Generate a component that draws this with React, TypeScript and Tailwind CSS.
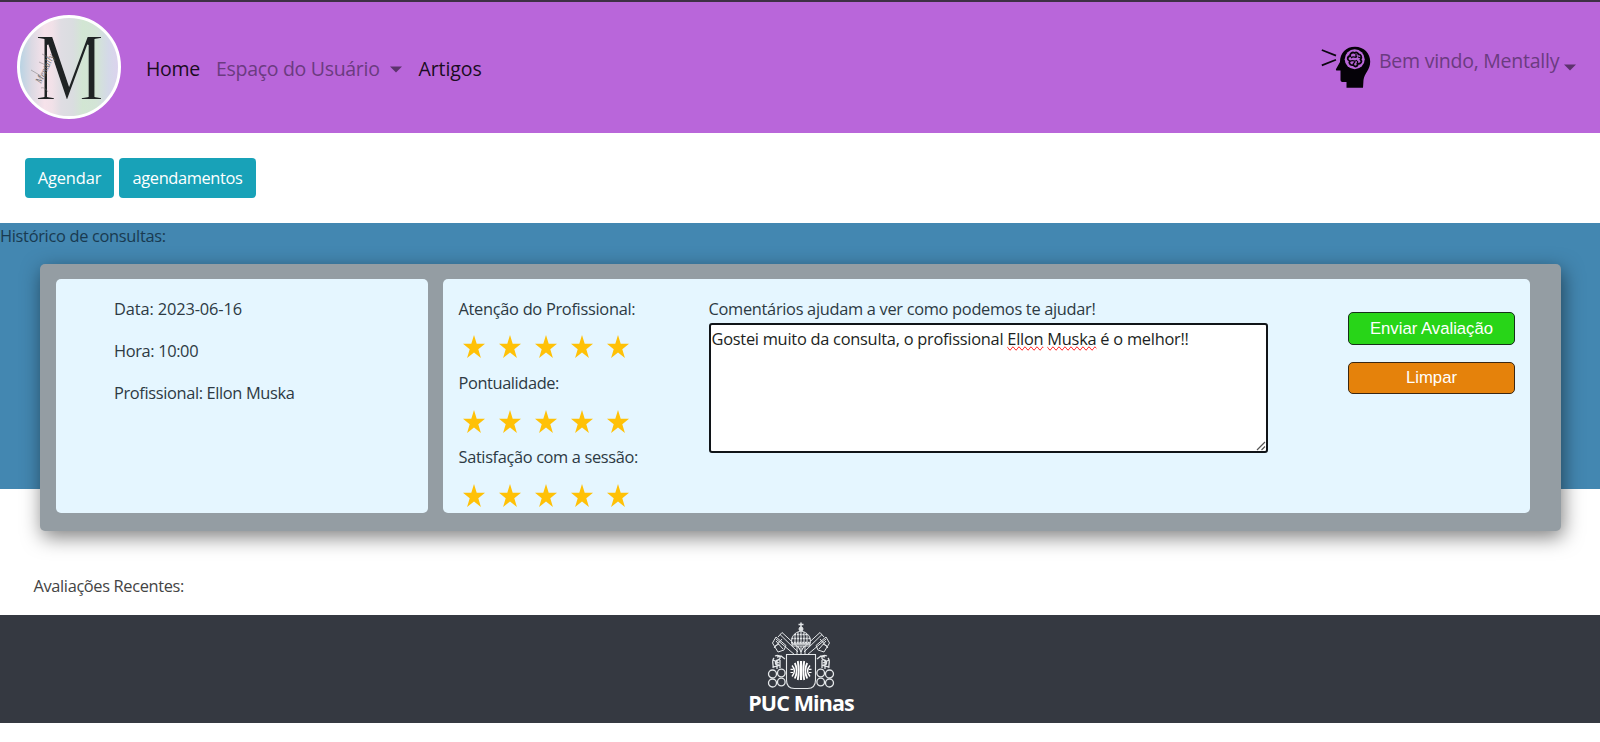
import React from "react";

const STAR = "M11 0 L13.7 8.4 L22 8.4 L15.3 13.6 L17.9 22 L11 16.8 L4.1 22 L6.7 13.6 L0 8.4 L8.3 8.4 Z";

function Stars() {
  return (
    <div className="flex h-[23px] gap-[14px] pl-[4px]">
      {[0, 1, 2, 3, 4].map((i) => (
        <svg key={i} width="22" height="23" viewBox="0 0 22 22" preserveAspectRatio="none" className="shrink-0">
          <path d={STAR} fill="#ffc107" />
        </svg>
      ))}
    </div>
  );
}

function Rating({ label, spacing }: { label: string; spacing: string }) {
  return (
    <div className="h-[74.2px]">
      <p className={"h-6 leading-6 whitespace-nowrap " + spacing}>{label}</p>
      <div className="pt-[14.4px]">
        <Stars />
      </div>
    </div>
  );
}

function Caret() {
  return (
    <svg width="12" height="7" viewBox="0 0 12 7" className="shrink-0">
      <path d="M0 0.5H12L6 6.5Z" fill="#5c336d" />
    </svg>
  );
}

function BrandLogo() {
  return (
    <svg width="104" height="104" viewBox="0 0 104 104" className="shrink-0 overflow-visible">
      <defs>
        <linearGradient id="brand" gradientUnits="userSpaceOnUse" x1="3" y1="0" x2="101" y2="0">
          <stop offset="0" stopColor="#b9d3e3" />
          <stop offset="0.12" stopColor="#dcd9e3" />
          <stop offset="0.25" stopColor="#f6e2ea" />
          <stop offset="0.33" stopColor="#f1e1e8" />
          <stop offset="0.42" stopColor="#dfdde3" />
          <stop offset="0.54" stopColor="#dadde0" />
          <stop offset="0.64" stopColor="#d2e6d3" />
          <stop offset="0.78" stopColor="#d3e4d6" />
          <stop offset="0.9" stopColor="#d4d9e8" />
          <stop offset="1" stopColor="#dcd3ee" />
        </linearGradient>
      </defs>
      <circle cx="52" cy="52" r="50.5" fill="url(#brand)" stroke="#fff" strokeWidth="3" />
      <text x="18" y="84.500" fontSize="97" textLength="69" lengthAdjust="spacingAndGlyphs" fill="#1f2324" stroke="url(#brand)" strokeWidth="1.8" className="font-['Liberation_Serif',serif]">M</text>
      <text transform="translate(24 69) rotate(-64)" fontSize="10" textLength="31" lengthAdjust="spacingAndGlyphs" fill="#777" className="font-['Liberation_Serif',serif] italic">Mentally</text>
      <path d="M14 55 24 61M22 47 33 52M25 39 33 43M31 77C29 74 27 72 24 73" stroke="#777" strokeWidth="0.5" fill="none" />
    </svg>
  );
}

function HeadIcon() {
  return (
    <svg width="50" height="43" viewBox="0 0 50 43" className="shrink-0">
      <path d="M0.8 4 15 9.600M0.8 19.400 15 13.800" stroke="#0b0610" strokeWidth="1.7" fill="none" />
      <path d="M34 0.800C43 0.800 49.200 7.300 49.200 15.500C49.200 24 43.500 27 42.500 34L42 41.800H25.500V36H21.500C20 36 19.500 35 19.500 33.500V24.500H15.500C14.800 24.500 14.800 23.500 15.200 22.800L19 16C19 7 25 0.800 34 0.800Z" fill="#050208" />
      <circle cx="33.700" cy="13.300" r="10" fill="#ba68da" />
      <path d="M33.700 7C31 5.500 28.500 8 29.200 10C26 10.500 26 14 28.500 15C27.500 18 30 19.500 32.500 19C33.500 21.500 37 20.500 36.500 18C40 18 41.500 15.500 39.500 13.500C41.500 11 39.500 8 37.500 8.500C37 6.500 35 6 33.700 7Z" fill="#b463d3" stroke="#08040a" strokeWidth="1.800" />
      <path d="M30 12C33 9 34 13 36 10M29 15.500C32 13 34 17 36 14M35 8V12M36.500 15V18M32 18L34 16M37 11L40 12" stroke="#08040a" strokeWidth="1.300" fill="none" />
    </svg>
  );
}

function Key() {
  return (
    <g>
      <path d="M11 15 15 10.500 33 27M9 17 28 33M13 12.500 31 30" />
      <path d="M5.500 21 9 15 19 23.500 17 28 11 30Z" />
      <path d="M7 26 15 17M9 19 16 27M12 22 8 24" />
    </g>
  );
}

function SideOrnament() {
  return (
    <g strokeWidth="1.300">
      <circle cx="5.500" cy="52" r="4" />
      <circle cx="14.300" cy="51" r="3.800" />
      <circle cx="5.500" cy="61" r="4" />
      <circle cx="14.300" cy="60" r="3.800" />
      <path d="M7 36C4 39 7 43 6 46M8 34C13 32 15 37 11 38C7 39 8 44 12 43M10 39V47M13 38V46M6 45 13 43M18 37 14 34 10 35M6 38 12 41" />
    </g>
  );
}

function Crest() {
  return (
    <svg width="68" height="68" viewBox="0 0 68 68" fill="none" stroke="#e4e7e9" strokeWidth="1" className="shrink-0">
      <Key />
      <g transform="translate(68 0) scale(-1 1)"><Key /></g>
      <g>
        <path d="M34 0.500V7M31.500 2.500H36.500" strokeWidth="1.500" />
        <circle cx="34" cy="7" r="2" fill="#dfe2e4" />
        <path d="M25 22C23 15 28 10 34 9C40 10 45 15 43 22Z" fill="#353941" />
        <path d="M24 20.500H44M24.500 16.500H43.500M27 12.500H41" strokeWidth="1.300" strokeDasharray="2 0.800" />
        <path d="M28 22V12M31 22V10M34 22V9M37 22V10M40 22V12M25 22H43V24H25Z" />
        <path d="M30 24V33M38 24V33M34 24V33M31 24 34 30 37 24" />
      </g>
      <SideOrnament />
      <g transform="translate(68 0) scale(-1 1)"><SideOrnament /></g>
      <path d="M19.500 32.500H48.500V58Q48.500 66.500 40.500 66.500H27.500Q19.500 66.500 19.500 58Z" fill="#353941" strokeWidth="1.100" />
      <g stroke="#fff" strokeWidth="1.800">
        <path d="M34 39V58" strokeWidth="2.200" />
        <path d="M30.800 39C32 45 32 52 30.800 58M37.200 39C36 45 36 52 37.200 58" />
        <path d="M27.800 41C30.300 46 30.300 51 27.800 56.500M40.200 41C37.700 46 37.700 51 40.200 56.500" />
        <path d="M25 43.500C28.300 47 28.300 50.500 25 54.500M43 43.500C39.700 47 39.700 50.500 43 54.500" strokeWidth="1.400" />
        <path d="M23.500 47.300H26M23.500 50.500H26M44.500 47.300H42M44.500 50.500H42" strokeWidth="1.200" />
      </g>
    </svg>
  );
}

export default function App() {
  return (
    <div className="flex h-[742px] w-[1600px] flex-col overflow-hidden bg-white font-['Open_Sans',sans-serif] text-[16.4px] text-[#2d3a43]">
      <header className="flex h-[133px] shrink-0 items-start border-t-2 border-[#3d3045] bg-[#b966da] pl-[17px] pt-[13px]">
        <BrandLogo />
        <nav className="mt-[39px] flex items-center pl-[25px] text-[19.5px] leading-[30px] text-[#1b0c22]">
          <a className="w-[70px] tracking-[-0.3px] whitespace-nowrap">Home</a>
          <a className="flex w-[202.5px] items-center justify-between pr-[16.5px] text-[#6b3b80]">
            <span className="tracking-[-0.3px] whitespace-nowrap">Espaço do Usuário</span>
            <Caret />
          </a>
          <a className="tracking-[-0.1px] whitespace-nowrap">Artigos</a>
        </nav>
        <div className="mr-[24px] ml-auto mt-[31px] flex text-[#6b3b80]">
          <HeadIcon />
          <span className="ml-[8px] w-[185px] text-[19.5px] leading-[29px] tracking-[-0.25px] whitespace-nowrap">Bem vindo, Mentally</span>
          <div className="pt-[18px]"><Caret /></div>
        </div>
      </header>

      <div className="flex h-[90px] shrink-0 gap-[5px] pt-[25px] pl-[25px] text-white">
        <button className="h-[40px] w-[89px] rounded-[4px] bg-[#18a2b8] pt-px tracking-[-0.1px]">Agendar</button>
        <button className="h-[40px] w-[137px] rounded-[4px] bg-[#18a2b8] pt-px tracking-[-0.37px]">agendamentos</button>
      </div>

      <section className="h-[266px] shrink-0 bg-[#4387b1]">
        <p className="h-[41px] pt-px leading-6 tracking-[-0.31px] text-[#193a50]">Histórico de consultas:</p>
        <div className="ml-[40px] flex h-[267px] w-[1521px] gap-[15px] rounded-[5px] bg-[#949da3] pt-[15px] pl-[16px] shadow-[2px_6px_20px_rgba(0,0,0,0.5)]">
          <div className="h-[234px] w-[372px] rounded-[5px] bg-[#e5f6ff] pt-[18px] pl-[58px] leading-6">
            <p className="mb-[17.8px] tracking-[-0.13px]">Data: 2023-06-16</p>
            <p className="mb-[17.8px] tracking-[-0.36px]">Hora: 10:00</p>
            <p className="tracking-[-0.36px]">Profissional: Ellon Muska</p>
          </div>
          <div className="flex h-[234px] w-[1087px] rounded-[5px] bg-[#e5f6ff] pl-[15.5px]">
            <div className="w-[250px] pt-[18px]">
              <Rating label="Atenção do Profissional:" spacing="tracking-[-0.3px]" />
              <Rating label="Pontualidade:" spacing="tracking-[-0.4px]" />
              <Rating label="Satisfação com a sessão:" spacing="tracking-[-0.36px]" />
            </div>
            <div className="w-[559px] pt-[18px]">
              <p className="h-[26px] leading-6 tracking-[-0.31px] whitespace-nowrap">Comentários ajudam a ver como podemos te ajudar!</p>
              <div className="flex h-[130px] flex-col justify-between rounded-[3px] border-2 border-[#101418] bg-white pt-[1.5px] pl-[1px] text-[#1c1f22]">
                <p className="leading-6 tracking-[-0.26px] whitespace-nowrap">
                  Gostei muito da consulta, o profissional{" "}
                  <span className="[text-decoration-line:spelling-error]">Ellon</span>{" "}
                  <span className="[text-decoration-line:spelling-error]">Muska</span> é o melhor!!
                </p>
                <svg width="10" height="10" viewBox="0 0 10 10" className="self-end">
                  <path d="M1 9 9 1M5.500 9 9 5.500" stroke="#555" strokeWidth="1.200" />
                </svg>
              </div>
            </div>
            <div className="ml-[80.5px] flex w-[167px] flex-col gap-[17px] pt-[33px] font-['Liberation_Sans',sans-serif] text-[16.7px] text-white">
              <button className="h-[33px] rounded-[5px] border border-[#17301a] bg-[#28d518]">Enviar Avaliação</button>
              <button className="h-[32px] rounded-[5px] border border-[#3a2712] bg-[#e5820b]">Limpar</button>
            </div>
          </div>
        </div>
      </section>

      <div className="h-[126px] shrink-0 pt-[85px] pl-[33.5px]">
        <p className="leading-6 tracking-[-0.36px] text-[#444]">Avaliações Recentes:</p>
      </div>

      <footer className="flex h-[108px] shrink-0 flex-col items-center bg-[#353941] pt-[7px] pl-[2px]">
        <Crest />
        <p className="text-[21.500px] leading-[26px] font-bold tracking-[-0.9px] whitespace-nowrap text-white">PUC Minas</p>
      </footer>
    </div>
  );
}
